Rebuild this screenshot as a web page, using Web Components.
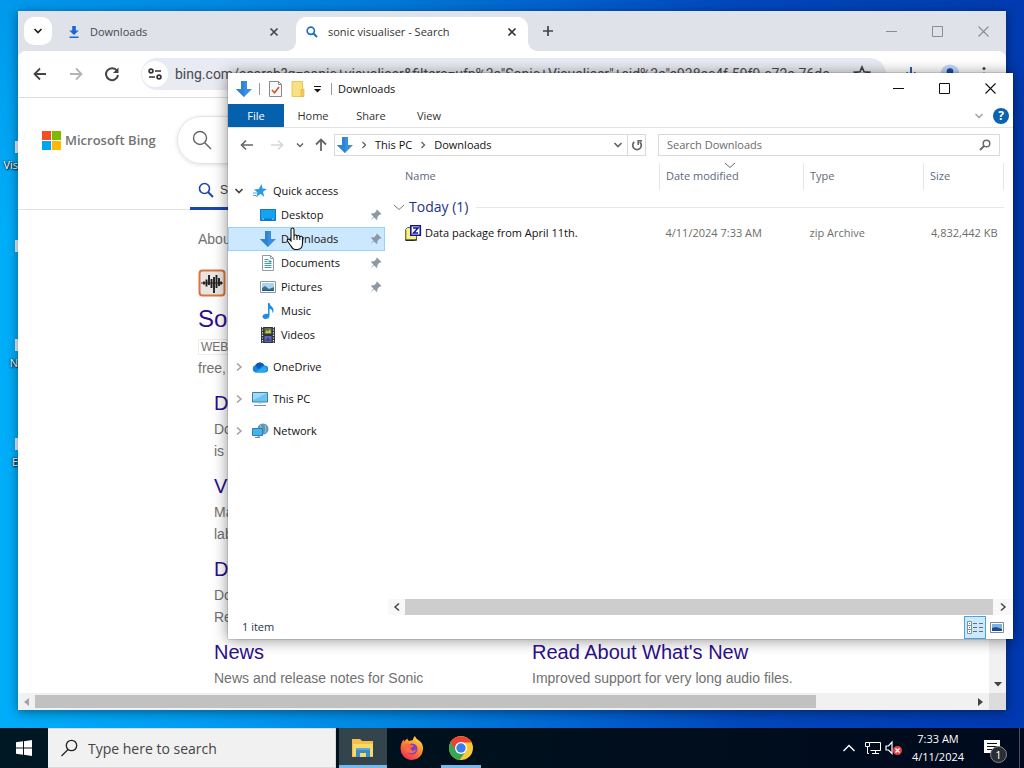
<!DOCTYPE html>
<html lang="en">
<head>
<meta charset="utf-8">
<title>Desktop</title>
<style>
  html, body { height: 100%; margin: 0; }
  body { overflow: hidden; font-family: "Open Sans", "Noto Sans", sans-serif; font-size: 11px; line-height: 16px; color: #111; }
</style>
</head>
<body>
<desk-top>
  <desk-icon label="Vis"></desk-icon>
  <desk-icon label=""></desk-icon>
  <desk-icon label="N"></desk-icon>
  <desk-icon label="E"></desk-icon>
  <browser-window slot="windows">
    <browser-tab slot="tabs" icon="save" title="Downloads"></browser-tab>
    <browser-tab slot="tabs" icon="bing" title="sonic visualiser - Search" active></browser-tab>
    <bing-page></bing-page>
  </browser-window>
  <file-explorer slot="windows"></file-explorer>
  <mouse-pointer slot="windows"></mouse-pointer>
  <task-bar slot="taskbar"></task-bar>
</desk-top>

<script>
// Icons: [width, height, markup]
const ICONS = {
  chevron: [10, 10, '<path d="M1.500 3l3.500 3.500L8.500 3" fill="none" stroke="currentColor" stroke-width="1.700"/>'],
  chevronThin: [12, 12, '<path d="M1 4l5 4.500L11 4" fill="none" stroke="currentColor" stroke-width="1"/>'],
  chevronRight: [10, 10, '<path d="M3 1.500L7 5 3 8.500" fill="none" stroke="currentColor" stroke-width="1.500"/>'],
  chevronLeft: [10, 10, '<path d="M7 1.500L3 5l4 3.500" fill="none" stroke="currentColor" stroke-width="1.500"/>'],
  chevronUp: [14, 14, '<path d="M1.500 10L7 4.500 12.500 10" fill="none" stroke="currentColor" stroke-width="1.400"/>'],
  back: [14, 14, '<path d="M13 7H2M7 1.500L1.500 7 7 12.500" fill="none" stroke="currentColor" stroke-width="1.800"/>'],
  forward: [14, 14, '<path d="M1 7h11M7 1.500L12.500 7 7 12.500" fill="none" stroke="currentColor" stroke-width="1.800"/>'],
  left: [14, 12, '<path d="M13 6H2M6 1.500L1.500 6 6 10.500" fill="none" stroke="currentColor" stroke-width="1.600"/>'],
  right: [14, 12, '<path d="M1 6h11M8 1.500L12.500 6 8 10.500" fill="none" stroke="currentColor" stroke-width="1.600"/>'],
  up: [12, 14, '<path d="M6 13V2M1 6.500l5-5 5 5" fill="none" stroke="currentColor" stroke-width="1.800"/>'],
  caret: [8, 8, '<path d="M1 2.500l3 3 3-3" fill="none" stroke="currentColor" stroke-width="1.500"/>'],
  crumb: [8, 8, '<path d="M2.500 1l3 3-3 3" fill="none" stroke="currentColor" stroke-width="1.400"/>'],
  reload: [16, 16, '<path d="M13 4.800A6 6 0 1 0 14 9" fill="none" stroke="currentColor" stroke-width="2"/><path d="M14.500 1.500v5.500H9z" fill="currentColor"/>'],
  refresh: [12, 13, '<path d="M3.300 3A4.300 4.300 0 1 0 8.700 3" fill="none" stroke="currentColor" stroke-width="1.700"/><path d="M11 1.700H7.200V6" fill="none" stroke="currentColor" stroke-width="1.600"/>'],
  tune: [14, 12, '<g fill="none" stroke="currentColor" stroke-width="1.700"><circle cx="3" cy="3" r="1.900"/><path d="M7 3h6M1 9h6"/><circle cx="11" cy="9" r="1.900"/></g>'],
  close: [10, 10, '<path d="M1.500 1.500l7 7M8.500 1.500l-7 7" stroke="currentColor" stroke-width="1.700"/>'],
  plus: [12, 12, '<path d="M6 1v10M1 6h10" stroke="currentColor" stroke-width="1.700"/>'],
  save: [12, 14, '<path d="M4.200 1h3.600v4.500h3L6 10 1.200 5.500h3zM1.500 11.500h9V13h-9z" fill="#1a66d6"/>'],
  download: [14, 16, '<path d="M7 1v10M2.500 6.500L7 11l4.500-4.500M1 11v3h12v-3" fill="none" stroke="#174ea6" stroke-width="1.800"/>'],
  bing: [12, 12, '<circle cx="4.800" cy="4.800" r="3.600" fill="none" stroke="#1b6ec2" stroke-width="1.700"/><path d="M7.500 7.500L11 11" stroke="#1b6ec2" stroke-width="1.900"/>'],
  lens: [20, 20, '<circle cx="8" cy="8" r="6.500" fill="none" stroke="currentColor" stroke-width="1.400"/><path d="M12.800 12.800L19 19" stroke="currentColor" stroke-width="1.500"/>'],
  lensBold: [16, 16, '<circle cx="6.500" cy="6.500" r="5" fill="none" stroke="currentColor" stroke-width="1.600"/><path d="M10 10l5 5" stroke="currentColor" stroke-width="2"/>'],
  lensLeft: [12, 12, '<circle cx="7.500" cy="4.500" r="3.300" fill="none" stroke="currentColor" stroke-width="1.500"/><path d="M5 7L1 11" stroke="currentColor" stroke-width="1.900"/>'],
  lensTask: [18, 18, '<circle cx="11.500" cy="6.500" r="5.200" fill="none" stroke="currentColor" stroke-width="1.300"/><path d="M8 10.500L1.500 17" stroke="currentColor" stroke-width="1.300"/>'],
  star: [18, 18, '<path d="M9 2l2.100 4.800 5.200.500-3.900 3.500 1.100 5.200L9 13.300 4.500 16l1.100-5.200-3.900-3.500 5.200-.500z" fill="none" stroke="#444" stroke-width="1.700"/>'],
  profile: [20, 20, '<circle cx="10" cy="10" r="9.500" fill="#c4d7f8"/><circle cx="10" cy="7.500" r="3.300" fill="#174ea6"/><path d="M4 16q6-6 12 0" fill="#174ea6"/>'],
  dots: [4, 16, '<g fill="#444"><circle cx="2" cy="2.500" r="1.500"/><circle cx="2" cy="8" r="1.500"/><circle cx="2" cy="13.500" r="1.500"/></g>'],
  winMin: [11, 11, '<path d="M0 5.500h11" stroke="currentColor"/>'],
  winMax: [11, 11, '<path d="M.5.500h10v10H.500z" fill="none" stroke="currentColor"/>'],
  winClose: [11, 11, '<path d="M.5.500l10 10M10.500.500l-10 10" stroke="currentColor" stroke-width="1.100"/>'],
  microsoft: [19, 19, '<path d="M0 0h9v9H0z" fill="#f25022"/><path d="M10 0h9v9h-9z" fill="#7fba00"/><path d="M0 10h9v9H0z" fill="#00a4ef"/><path d="M10 10h9v9h-9z" fill="#ffb900"/>'],
  sonic: [28, 28, '<rect x="1.500" y="1.500" width="25" height="25" rx="3" fill="#e9e5e2" stroke="#d9743c" stroke-width="2"/><path d="M3 14h22" stroke="#222"/><path d="M6 12.500v3M8.500 10.500v7M11 6v10M13.500 10v9M16 8v16M18.500 6v13M21 9v8M23 12.500v3" stroke="#222" stroke-width="1.900"/>'],
  arrowDown: [16, 18, '<path d="M5 1h6v8h5l-8 8-8-8h5z" fill="#3a8fdc"/><path d="M5 1h3v16L0 9h5z" fill="#2e83d2"/>'],
  check: [13, 16, '<path d="M.5.500h9l3 3v12H.500z" fill="#f8f8f8" stroke="#8a8a8a"/><path d="M9.500.500v3h3" fill="none" stroke="#8a8a8a"/><path d="M3 9l2.500 2.800L10 6" fill="none" stroke="#d4562e" stroke-width="1.600"/>'],
  folderPlain: [14, 16, '<path d="M1 .500h10.500v15H1z" fill="#fbe083" stroke="#e3bd4b" stroke-width=".8"/><path d="M10 8.500l3-.5v7.500H10z" fill="#f0cb60" stroke="#d9b040" stroke-width=".6"/>'],
  quickCaret: [8, 8, '<path d="M0 1.500h7" stroke="#111"/><path d="M0 4h7L3.500 7.500z" fill="#111"/>'],
  help: [16, 16, '<circle cx="8" cy="8" r="8" fill="#0a63b0"/>'],
  quick: [14, 14, '<path d="M8.500 0l1 4.600 4.500.400-4 2.800L11.300 13 7.500 9.800 3 13.500l1.500-5L1 5.600l4.800-.600z" fill="#2a9ae6"/><path d="M0 9h4M0 11.500h3" stroke="#49a8ea"/>'],
  desktop: [16, 14, '<path d="M.5 1.500h15v11H.500z" fill="#15a2ef" stroke="#0f78c4"/><path d="M1 10.500h14v1.500H1z" fill="#0b7bd0"/><path d="M2 11h2M12 11h2" stroke="#d8f0ff" stroke-width=".7"/>'],
  document: [12, 16, '<path d="M.5.500h8l3 3v12H.500z" fill="#fff" stroke="#8c9aa5"/><path d="M8.500.500v3h3" fill="none" stroke="#8c9aa5"/><path d="M2.500 4.500h4M2.500 6.500h3M2.500 8.500h7M2.500 10.500h7M2.500 12.500h7" stroke="#4197b8"/><path d="M6.500 5.500h3v2h-3z" fill="#44a06f"/>'],
  picture: [16, 12, '<path d="M.5.500h15v11H.500z" fill="#fff" stroke="#8a98a5"/><path d="M2 2h12v8H2z" fill="#a9d4ef"/><path d="M2 7l3-2 4 3 5-2v4H2z" fill="#39718f"/><path d="M2 9h12v1H2z" fill="#2a5378"/>'],
  music: [12, 16, '<path d="M6 0h1.500c.5 3 4 3.800 4 7.200 0 1.300-.4 2-1.200 3 .6-3-1-4-2.800-4.400v7C7.500 15 5.500 16 3.500 16 1.500 16 .500 15 .500 13.500 .500 11.500 3.500 10.500 6 11z" fill="#1d8fe0"/>'],
  video: [14, 16, '<path d="M0 0h14v16H0z" fill="#30323a"/><path d="M1.500 0v16M12.500 0v16" stroke="#e5e5e5" stroke-width="1.200" stroke-dasharray="1.200 1.400"/><path d="M3.500 1h7v6h-7z" fill="#67713c"/><path d="M3.500 9h7v6h-7z" fill="#6564b8"/><path d="M4 6l2-3 1 2 2-3 1 4z" fill="#cbc75b"/><path d="M4 14l3-4 3 4z" fill="#37478b"/>'],
  cloud: [16, 12, '<path d="M4 11.500a3.800 3.800 0 0 1-.5-7.400A5 5 0 0 1 12.500 4.500 3.500 3.500 0 0 1 13 11.500z" fill="#1484dc"/><path d="M3.500 4.100A5 5 0 0 1 12 3.800L6 8z" fill="#0a59b5"/><path d="M3 11.500L12.500 5a3.500 3.500 0 0 1 .5 6.500z" fill="#2ba7ef"/>'],
  pc: [16, 16, '<path d="M.5 1.500h15v9.500H.500z" fill="#6bc4f1" stroke="#3c7fa8"/><path d="M1 2h14L1 9z" fill="#9adcf9"/><path d="M6 11h4v1.500H6z" fill="#a9bdc8"/><path d="M2 14.500h12" stroke="#7292a4"/>'],
  network: [17, 16, '<circle cx="11" cy="6" r="5.500" fill="#5f97b5"/><path d="M8 2q3 3 0 7M13 2q2 4 0 8" fill="none" stroke="#a9d2e4" stroke-width=".8"/><path d="M.5 5.500h10v7H.500z" fill="#45b2ec" stroke="#2a7fb5"/><path d="M5 13h2v1.500H3h5" fill="none" stroke="#6c8fa5"/>'],
  pin: [12, 12, '<path d="M7 .500L11.500 5l-1 .8-1-.2L7.500 8 7.300 10.200 6.500 11 4 8.300.500 11.500 3.500 7.600 1 5l.8-.8L4 4.300 6.400 2.300 6.200 1.300z" fill="#8c99a5"/>'],
  zip: [17, 16, '<path d="M.5 4.500l2-2h4v3h5v9l-2 1H.500z" fill="#f4f08c" stroke="#555"/><path d="M1 5v9.500" stroke="#a4a000"/><path d="M1 15h11" stroke="#000"/><path d="M5.800.800h9.500v9.500H5.800z" fill="#fff" stroke="#1212a0" stroke-width="1.600"/><path d="M8 3h5L8.500 8H13" fill="none" stroke="#1212a0" stroke-width="1.500"/>'],
  details: [18, 13, '<path d="M1.500.500h4v12h-4zM1.500 4.500h4M1.500 8.500h4" fill="#fff" stroke="#7895a8"/><path d="M3 2.500h1M3 6.500h1M3 10.500h1" stroke="#c23b3b"/><path d="M7 2.500h4M7 6.500h4M7 10.500h4M13 2.500h4M13 6.500h4M13 10.500h4" stroke="#5c7180"/>'],
  thumbs: [14, 11, '<path d="M.5.500h13v10H.500z" fill="#fff" stroke="#7d8b99"/><path d="M2 2h10v7H2z" fill="#78b4e8"/><path d="M2 6l4-1 6 2v2H2z" fill="#234a84"/>'],
  triLeft: [5, 8, '<path d="M5 0v8L0 4z" fill="#a3a3a3"/>'],
  triRight: [5, 8, '<path d="M0 0v8l5-4z" fill="#444"/>'],
  triDown: [8, 5, '<path d="M0 0h8L4 4.500z" fill="#444"/>'],
  start: [16, 16, '<path d="M0 2.300L7 1.300V7.600H0zM8 1.200L16 0v7.600H8zM0 8.500h7v6.300L0 13.800zM8 8.500h8V16l-8-1.200z" fill="#fff"/>'],
  explorer: [22, 18, '<path d="M0 0h8l2 2h11v16H0z" fill="#f3c04a"/><path d="M1 5h20v12H1z" fill="#fbd968"/><path d="M4 9h14v9h-4v-4H8v4H4z" fill="#3b8ec5"/><path d="M4 9h14v2H4z" fill="#5ba9d8"/><path d="M8 14h6v4H8z" fill="#fbd968"/>'],
  firefox: [24, 24, '<defs><linearGradient id="f" x1=".8" y1="0" x2=".2" y2="1"><stop offset="0" stop-color="#ffe14d"/><stop offset=".45" stop-color="#ff8a2a"/><stop offset="1" stop-color="#f0255f"/></linearGradient></defs><path d="M13 4c0-2 1-3 2-4 .5 2 2 3 4 4.500 2.500 1.500 4.500 5 4 9A11.300 11.300 0 0 1 12 24 11.300 11.300 0 0 1 .600 12C.600 8.500 2 5.500 3.500 3.500c.2 1 .5 1.500 1 2C5.500 3.500 6.500 3 7.500 2.500c0 1 .5 2 1.500 2.500z" fill="url(#f)"/><circle cx="12" cy="13" r="5.500" fill="#7a3fd0"/><path d="M4 9c2-2 5-2 7 0l3 .500c-1 2-3 1.500-3.500 3 .5 2.500 4 3 6 .500C16 18 8 19 6 14z" fill="#ff6a3a"/>'],
  chrome: [24, 24, '<circle cx="12" cy="12" r="12" fill="#fcc934"/><path d="M12 12L1.600 6A12 12 0 0 0 10.500 23.900L17 15z" fill="#34a853"/><path d="M1.600 6a12 12 0 0 1 20.800 0.500H12L7 15z" fill="#ea4335"/><circle cx="12" cy="12" r="6" fill="#fff"/><circle cx="12" cy="12" r="4.700" fill="#3b7ded"/>'],
  ethernet: [17, 14, '<path d="M5.500 1.500h11v8H6.500M3.500 6v6.500M8 12.500h7M11.500 10v2.500" fill="none" stroke="#fff"/><path d="M1.500 1.500h4v4h-4zM3.500 12.500H5" fill="none" stroke="#fff"/>'],
  volume: [18, 16, '<path d="M1 6h2.500L7 2v11.500L3.500 10H1z" fill="none" stroke="#fff" stroke-width="1.200"/><circle cx="12.500" cy="10.500" r="4.500" fill="#e04545"/><path d="M10.500 8.500l4 4M14.500 8.500l-4 4" stroke="#fff" stroke-width="1.200"/>'],
  note: [16, 17, '<path d="M0 0h16v13h-6l-3 3.500V13H0z" fill="#fff"/><path d="M3 3.500h10M3 6.500h10M3 9.500h7" stroke="#061020"/>'],
  hand: [18, 24, '<path d="M5 14V2.500a1.500 1.500 0 0 1 3 0V9c.5-1.500 2.800-1.200 3 .3.500-1.200 2.600-1 2.800.5.700-1 2.700-.7 2.700 1V16c0 4-2 6.500-5 6.500H9c-2 0-3-1.500-4-3.500L1.500 14c-.7-1.500.7-2.500 2-1.500z" fill="#fff" stroke="#111" stroke-width="1.100"/><path d="M8 9v4M11 9.500V13M13.800 10v3" stroke="#111"/>']
};

const icon = (name, attrs = '') => `<ui-icon name="${name}" ${attrs}></ui-icon>`;

// Rules shared by every component
const RESET = `
  * { box-sizing: border-box; }
  :host { box-sizing: border-box; }
  :host([hidden]) { display: none; }
  button, input { font: inherit; color: inherit; border: 0; padding: 0; margin: 0; background: none; outline: 0; }
  button { display: flex; align-items: center; justify-content: center; }
  input { min-width: 0; }
  a { text-decoration: none; }
`;

class BaseElement extends HTMLElement {
  connectedCallback() {
    if (this.shadowRoot) return;
    this.attachShadow({ mode: 'open' });
    this.shadowRoot.innerHTML = `<style>${RESET}${this.styles()}</style>${this.markup()}`;
  }
  attr(name) {
    return this.getAttribute(name) || '';
  }
  styles() { return ''; }
  markup() { return '<slot></slot>'; }
}

class UiIcon extends BaseElement {
  styles() {
    return ':host { display: inline-flex; flex: none; } svg { display: block; }';
  }
  markup() {
    const [w, h, body] = ICONS[this.attr('name')];
    return `<svg width="${w}" height="${h}" viewBox="0 0 ${w} ${h}" aria-hidden="true">${body}</svg>`;
  }
}

class DeskTop extends BaseElement {
  styles() {
    return `
      :host { display: flex; flex-direction: column; height: 100%;
        background: linear-gradient(180deg, rgba(0, 70, 180, .2), transparent 30%),
          linear-gradient(90deg, #00adf9 0%, #009cf0 20%, #0086e2 38%, #0066d2 55%, #0048bd 72%, #0038b0 100%); }
      .area { position: relative; flex: 1; min-height: 0; overflow: hidden; }
      .icons { display: flex; flex-direction: column; padding-top: 141px; width: 18px; }
    `;
  }
  markup() {
    return `
      <div class="area">
        <div class="icons"><slot></slot></div>
        <slot name="windows"></slot>
      </div>
      <slot name="taskbar"></slot>
    `;
  }
}

class DeskIcon extends BaseElement {
  styles() {
    return `
      :host { display: flex; flex-direction: column; align-items: flex-end; height: 99px; color: #fff; text-shadow: 1px 1px 2px #000, 0 0 2px #000; }
      i { width: 3px; height: 12px; margin-bottom: 4px; background: #e8f1f8; }
    `;
  }
  markup() {
    return `<i></i><span>${this.attr('label')}</span>`;
  }
}

class WindowControls extends BaseElement {
  styles() {
    return `
      :host { display: flex; align-self: stretch; }
      button { width: 46px; }
    `;
  }
  markup() {
    return `
      <button aria-label="Minimize">${icon('winMin')}</button>
      <button aria-label="Maximize">${icon('winMax')}</button>
      <button aria-label="Close">${icon('winClose')}</button>
    `;
  }
}

class BrowserTab extends BaseElement {
  styles() {
    return `
      :host { display: flex; align-items: center; width: 238px; height: 34px; padding: 0 16px 4px 10px; gap: 10px; color: #45484d; }
      :host([active]) { width: 232px; padding-right: 10px; background: #fff; border-radius: 10px 10px 0 0; color: #333; position: relative; }
      .title { flex: 1; justify-content: flex-start; white-space: nowrap; }
      .x { width: 12px; height: 16px; }
      :host([active])::before, :host([active])::after { content: ""; position: absolute; bottom: 0; width: 10px; height: 10px; }
      :host([active])::before { left: -10px; background: radial-gradient(circle at 0 0, transparent 10px, #fff 10px); }
      :host([active])::after { right: -10px; background: radial-gradient(circle at 100% 0, transparent 10px, #fff 10px); }
    `;
  }
  markup() {
    return `
      ${icon(this.attr('icon'))}
      <button class="title">${this.attr('title')}</button>
      <button class="x" aria-label="Close tab">${icon('close')}</button>
    `;
  }
}

class ScrollBar extends BaseElement {
  styles() {
    return `
      :host { display: flex; align-items: stretch; height: 17px; background: #f1f1f1; color: #444; }
      .arrow { width: 17px; flex: none; }
      .thumb { flex: 5; margin: 2px 0; background: #c1c1c1; }
      .rest { flex: 1; }
      :host([vertical]) { flex-direction: column; justify-content: flex-end; width: 17px; height: auto; }
      :host([vertical]) .arrow { width: 17px; height: 18px; }
      :host([full]) { height: 16px; background: #f8f8f8; }
      :host([full]) .thumb { margin: 0; background: #cdcdcd; }
      :host([full]) .right { width: 20px; }
    `;
  }
  markup() {
    if (this.hasAttribute('vertical')) return `<button class="arrow" aria-label="Scroll down">${icon('triDown')}</button>`;
    const full = this.hasAttribute('full');
    return `
      <button class="arrow" aria-label="Scroll left">${icon(full ? 'chevronLeft' : 'triLeft')}</button>
      <div class="thumb"></div>
      ${full ? '' : '<div class="rest"></div>'}
      <button class="arrow right" aria-label="Scroll right">${icon(full ? 'chevronRight' : 'triRight')}</button>
    `;
  }
}

class BrowserWindow extends BaseElement {
  styles() {
    return `
      :host { position: absolute; inset: 11px 18px 18px 18px; display: flex; flex-direction: column; background: #dfe2e8; box-shadow: 0 2px 10px rgba(0, 0, 0, .45); }
      .strip { display: flex; align-items: flex-end; height: 40px; flex: none; }
      .list { align-self: center; width: 28px; height: 28px; margin: 0 6px; border-radius: 10px; background: #fff; color: #222; }
      .tabs { display: flex; }
      .new { align-self: center; width: 20px; height: 20px; margin-left: 10px; color: #444; }
      window-controls { margin-left: auto; color: #8b8d92; }
      .toolbar { display: flex; align-items: center; height: 47px; flex: none; padding: 0 20px 0 4px; background: #fff; border-radius: 8px 8px 0 0; border-bottom: 1px solid #dcdde0; color: #444; }
      .nav { width: 36px; height: 28px; }
      .off { color: #b4b4b4; }
      .omnibox { display: flex; align-items: center; flex: 1; height: 32px; margin: 0 18px 0 11px; padding: 0 15px 0 1px; border-radius: 16px; background: #e9ebf2; }
      .info { width: 26px; height: 26px; border-radius: 50%; background: #fff; color: #333; margin-right: 7px; }
      .omnibox input { flex: 1; font: 14px/20px Roboto, "Noto Sans", sans-serif; height: 20px; color: #474a50; }
      .tools { display: flex; align-items: center; gap: 22px; }
      ::slotted(bing-page) { flex: 1; min-height: 0; }
      .row { display: flex; flex: 1; min-height: 0; }
      .bottom { display: flex; background: #dcdcdc; }
      .bottom scroll-bar { flex: 1; }
      .corner { width: 17px; }
    `;
  }
  markup() {
    return `
      <div class="strip">
        <button class="list" aria-label="Search tabs">${icon('chevron')}</button>
        <div class="tabs"><slot name="tabs"></slot></div>
        <button class="new" aria-label="New tab">${icon('plus')}</button>
        <window-controls></window-controls>
      </div>
      <div class="toolbar">
        <button class="nav" aria-label="Back">${icon('back')}</button>
        <button class="nav off" aria-label="Forward">${icon('forward')}</button>
        <button class="nav" aria-label="Reload">${icon('reload')}</button>
        <div class="omnibox">
          <button class="info" aria-label="Site information">${icon('tune')}</button>
          <input aria-label="Address" value="bing.com/search?q=sonic+visualiser&amp;filters=ufn%3a&quot;Sonic+Visualiser&quot;+sid%3a&quot;e938ec4f-59f9-c72e-76de">
          ${icon('star')}
        </div>
        <div class="tools">${icon('download')}${icon('profile')}${icon('dots')}</div>
      </div>
      <div class="row"><slot></slot><scroll-bar vertical></scroll-bar></div>
      <div class="bottom"><scroll-bar></scroll-bar><div class="corner"></div></div>
    `;
  }
}

class SiteLink extends BaseElement {
  styles() {
    return `
      :host { display: block; height: 83px; overflow: hidden; }
      a { display: block; font-size: 20px; line-height: 26px; color: #2c0f8c; margin-bottom: 2px; white-space: nowrap; }
      p { margin: 0; font-size: 14px; line-height: 22px; white-space: pre-line; }
    `;
  }
  markup() {
    return `<a href="#">${this.attr('title')}</a><p><slot></slot></p>`;
  }
}

class BingPage extends BaseElement {
  styles() {
    return `
      :host { display: block; background: #fff; overflow: hidden; font-family: "Liberation Sans", Arial, sans-serif; font-size: 14px; color: #717171; }
      header { display: flex; align-items: center; gap: 4px; height: 48px; margin: 18px 0 0 24px; }
      .brand { width: 108px; font: 600 13px/20px "Open Sans", sans-serif; color: #737373; white-space: nowrap; }
      .search { flex: 1; height: 48px; border: 1px solid #e3e3e3; border-radius: 24px; margin-right: 20px; padding: 0 14px; display: flex; align-items: center; box-shadow: 0 1px 4px rgba(0, 0, 0, .12); color: #666; }
      nav { display: flex; margin-top: 8px; padding-left: 172px; height: 38px; border-bottom: 1px solid #e2e2e2; }
      nav a { display: flex; align-items: center; gap: 6px; padding: 0 8px; height: 38px; border-bottom: 3px solid #1b46ad; color: #444; font-size: 12px; }
      nav ui-icon { color: #1b46ad; }
      main { padding: 19px 0 0 180px; }
      .count { line-height: 20px; margin-bottom: 20px; }
      .main { display: block; font-size: 24px; line-height: 32px; color: #2c0f8c; margin: 6px 0 3px; }
      .main, .sub { white-space: nowrap; }
      .web { display: inline-block; border: 1px solid #ececec; padding: 0 2px; font-size: 12px; line-height: 14px; }
      .sub { line-height: 22px; margin-top: 2px; height: 33px; }
      .links { display: grid; grid-template-columns: 294px 294px; column-gap: 24px; padding-left: 16px; }
      .pic { display: flex; }
    `;
  }
  markup() {
    return `
      <header>
        ${icon('microsoft')}
        <span class="brand">Microsoft Bing</span>
        <div class="search">${icon('lens')}</div>
      </header>
      <nav><a href="#">${icon('lensBold')}S</a></nav>
      <main>
        <div class="count">About</div>
        <div class="pic">${icon('sonic')}</div>
        <a class="main" href="#">Sonic</a>
        <span class="web">WEB</span>
        <div class="sub">free,</div>
        <div class="links">
          <site-link title="D">Do\nis</site-link><span></span>
          <site-link title="V">Ma\nlab</site-link><span></span>
          <site-link title="D">Do\nRe</site-link><span></span>
          <site-link title="News">News and release notes for Sonic</site-link>
          <site-link title="Read About What's New">Improved support for very long audio files.</site-link>
        </div>
      </main>
    `;
  }
}

class NavItem extends BaseElement {
  styles() {
    return `
      :host { display: flex; align-items: center; height: 24px; padding: 0 2px 0 5px; border: 1px solid transparent; color: #111; white-space: nowrap; }
      :host([selected]) { background: #cce8ff; border-color: #99d1ff; }
      :host([child]) { padding-left: 13px; }
      :host([top]) { margin-top: 8px; }
      .arrow { width: 10px; height: 10px; display: flex; color: #a0a0a0; }
      :host([open]) .arrow { color: #444; }
      .pic { width: 16px; margin: 0 5px 0 8px; display: flex; justify-content: center; }
      a { color: inherit; flex: 1; }
    `;
  }
  markup() {
    let arrow = '';
    if (this.hasAttribute('open')) arrow = icon('chevron');
    else if (!this.hasAttribute('child')) arrow = icon('chevronRight');
    return `
      <span class="arrow">${arrow}</span>
      <span class="pic">${icon(this.attr('icon'))}</span>
      <a href="#">${this.attr('label')}</a>
      ${this.hasAttribute('pinned') ? icon('pin') : ''}
    `;
  }
}

class FileList extends BaseElement {
  styles() {
    return `
      :host { display: block; flex: 1; padding: 4px 9px 0 5px; }
      table { width: 100%; table-layout: fixed; border-collapse: collapse; color: #6d6d6d; }
      th { font-weight: normal; text-align: left; padding: 0; }
      thead th { height: 27px; padding: 0 6px 2px; color: #5c6a7c; border-right: 1px solid #e5e5e5; position: relative; }
      thead th:first-child, .name { padding-left: 12px; }
      thead ui-icon { position: absolute; top: -4px; left: 45%; }
      .date { width: 144px; }
      .type { width: 120px; }
      .size { width: 80px; }
      .group { display: flex; align-items: center; gap: 4px; height: 34px; color: #1e3287; font-size: 14px; }
      .group ui-icon { color: #777; }
      .group hr { flex: 1; margin: 0 0 0 4px; border: 0; border-top: 1px solid #e8e8e8; }
      td { height: 18px; padding: 0 6px; white-space: nowrap; }
      .name div { display: flex; align-items: center; gap: 3px; color: #111; }
      td.size { text-align: right; }
    `;
  }
  markup() {
    return `
      <table>
        <thead><tr>
          <th>Name</th>
          <th class="date">Date modified${icon('chevronThin')}</th>
          <th class="type">Type</th>
          <th class="size">Size</th>
        </tr></thead>
        <tbody>
          <tr><th colspan="4"><div class="group">${icon('chevronThin')}Today (1)<hr></div></th></tr>
          <tr>
            <td class="name"><div>${icon('zip')}Data package from April 11th.</div></td>
            <td>4/11/2024 7:33 AM</td>
            <td>zip Archive</td>
            <td class="size">4,832,442 KB</td>
          </tr>
        </tbody>
      </table>
    `;
  }
}

class FileExplorer extends BaseElement {
  styles() {
    return `
      :host { position: absolute; inset: 73px 11px 89px 228px; display: flex; flex-direction: column; background: #fff; box-shadow: 0 1px 14px rgba(0, 0, 0, .45), 0 0 1px rgba(0, 0, 0, .6); }
      .title { display: flex; align-items: center; height: 31px; padding-left: 8px; flex: none; }
      .sep { width: 1px; height: 12px; background: #999; }
      .quick { display: flex; align-items: center; gap: 9px; margin: 0 6px 0 7px; }
      window-controls { margin-left: auto; color: #111; }
      .ribbon { display: flex; align-items: stretch; height: 24px; flex: none; border-bottom: 1px solid #e2e2e2; color: #333; }
      .ribbon button { width: 58px; }
      .ribbon .file { width: 56px; background: #0560ad; color: #fff; }
      .ribbon .more { width: 24px; margin-left: auto; color: #aaa; }
      .ribbon .help { position: relative; width: 20px; margin-right: 2px; }
      .help b { position: absolute; inset: 0; line-height: 23px; font-size: 12px; color: #fff; }
      .bar { display: flex; align-items: center; height: 31px; padding: 3px 13px 0 11px; flex: none; color: #666; }
      .bar > button { width: 16px; height: 22px; margin-right: 14px; }
      .bar > .off { color: #d6d6d6; margin-right: 10px; }
      .bar > .recent { width: 10px; margin-right: 9px; }
      .bar > .up { width: 14px; margin-right: 6px; }
      .box { display: flex; align-items: center; height: 22px; border: 1px solid #d9d9d9; }
      .path { flex: 308; padding-left: 2px; gap: 6px; }
      .path ui-icon[name=crumb] { margin: 0 1px; }
      .path a { color: #111; }
      .path .recent { margin-left: auto; margin-right: -2px; }
      .path .reload { width: 18px; height: 20px; border-left: 1px solid #d9d9d9; }
      .find { flex: 324; margin-left: 12px; padding: 0 8px; color: #6b6b6b; }
      .find input { flex: 1; height: 16px; }
      .find input::placeholder { color: #6b6b6b; opacity: 1; }
      .body { display: flex; flex: 1; min-height: 0; }
      nav { width: 157px; padding-top: 20px; flex: none; }
      .files { display: flex; flex-direction: column; flex: 1; min-width: 0; margin-left: 3px; }
      footer { display: flex; align-items: center; height: 24px; padding: 0 5px 0 14px; flex: none; color: #26344d; }
      footer button { width: 22px; height: 23px; }
      footer .on { margin-left: auto; border: 1px solid #4aa3dc; background: #cde8f8; }
    `;
  }
  markup() {
    return `
      <div class="title">
        ${icon('arrowDown')}
        <div class="quick"><i class="sep"></i>${icon('check')}${icon('folderPlain')}${icon('quickCaret')}<i class="sep"></i></div>
        Downloads
        <window-controls></window-controls>
      </div>
      <div class="ribbon">
        <button class="file">File</button>
        <button>Home</button>
        <button>Share</button>
        <button>View</button>
        <button class="more" aria-label="Expand the ribbon">${icon('chevron')}</button>
        <button class="help" aria-label="Help">${icon('help')}<b>?</b></button>
      </div>
      <div class="bar">
        <button aria-label="Back">${icon('left')}</button>
        <button class="off" aria-label="Forward">${icon('right')}</button>
        <button class="recent" aria-label="Recent locations">${icon('caret')}</button>
        <button class="up" aria-label="Up">${icon('up')}</button>
        <div class="box path">
          ${icon('arrowDown')}
          ${icon('crumb')}<a href="#">This PC</a>
          ${icon('crumb')}<a href="#">Downloads</a>
          <button class="recent" aria-label="Previous locations">${icon('chevron')}</button>
          <button class="reload" aria-label="Refresh">${icon('refresh')}</button>
        </div>
        <div class="box find"><input aria-label="Search Downloads" placeholder="Search Downloads">${icon('lensLeft')}</div>
      </div>
      <div class="body">
        <nav>
          <nav-item icon="quick" label="Quick access" open></nav-item>
          <nav-item icon="desktop" label="Desktop" child pinned></nav-item>
          <nav-item icon="arrowDown" label="Downloads" child pinned selected></nav-item>
          <nav-item icon="document" label="Documents" child pinned></nav-item>
          <nav-item icon="picture" label="Pictures" child pinned></nav-item>
          <nav-item icon="music" label="Music" child></nav-item>
          <nav-item icon="video" label="Videos" child></nav-item>
          <nav-item icon="cloud" label="OneDrive" top></nav-item>
          <nav-item icon="pc" label="This PC" top></nav-item>
          <nav-item icon="network" label="Network" top></nav-item>
        </nav>
        <div class="files">
          <file-list></file-list>
          <scroll-bar full></scroll-bar>
        </div>
      </div>
      <footer>
        1 item
        <button class="on" aria-label="Details view">${icon('details')}</button>
        <button aria-label="Thumbnail view">${icon('thumbs')}</button>
      </footer>
    `;
  }
}

class MousePointer extends BaseElement {
  styles() {
    return ':host { position: absolute; left: 286px; top: 227px; }';
  }
  markup() {
    return icon('hand');
  }
}

class TaskBar extends BaseElement {
  styles() {
    return `
      :host { display: flex; height: 40px; flex: none; background: linear-gradient(90deg, #001824, #00101c 45%, #000a1e); color: #fff; }
      .start { width: 48px; }
      .search { display: flex; align-items: center; gap: 10px; width: 288px; padding: 0 12px; background: #f1f1f1; color: #222; border: 1px solid #dadada; border-left: 0; }
      .search input { flex: 1; font-size: 14px; height: 22px; }
      .search input::placeholder { color: #444; opacity: 1; }
      .apps { display: flex; margin-left: 3px; }
      .apps button { width: 48px; border-bottom: 3px solid transparent; padding-top: 3px; margin-right: 1px; }
      .apps .active { background: #33444c; border-color: #76b9ed; }
      .apps .running { width: 40px; margin-left: 4px; border-color: #76b9ed; }
      .tray { display: flex; align-items: center; margin-left: auto; gap: 4px; }
      .tray ui-icon[name=chevronUp] { margin-right: 4px; }
      .clock { width: 54px; margin-left: 4px; text-align: center; line-height: 18px; white-space: nowrap; }
      .notes { position: relative; width: 46px; height: 40px; }
      .badge { position: absolute; right: 8px; bottom: 5px; width: 17px; height: 17px; border: 1px solid #888; border-radius: 50%; background: #2a2d33; line-height: 15px; }
      .peek { align-self: stretch; width: 5px; border-left: 1px solid #4a5060; }
    `;
  }
  markup() {
    return `
      <button class="start" aria-label="Start">${icon('start')}</button>
      <label class="search">${icon('lensTask')}<input aria-label="Search" placeholder="Type here to search"></label>
      <div class="apps">
        <button class="active" aria-label="File Explorer">${icon('explorer')}</button>
        <button aria-label="Firefox">${icon('firefox')}</button>
        <button class="running" aria-label="Chrome">${icon('chrome')}</button>
      </div>
      <div class="tray">
        ${icon('chevronUp')}${icon('ethernet')}${icon('volume')}
        <div class="clock">7:33 AM<br>4/11/2024</div>
        <button class="notes" aria-label="Notifications">${icon('note')}<span class="badge">1</span></button>
        <span class="peek"></span>
      </div>
    `;
  }
}

customElements.define('ui-icon', UiIcon);
customElements.define('desk-top', DeskTop);
customElements.define('desk-icon', DeskIcon);
customElements.define('window-controls', WindowControls);
customElements.define('browser-tab', BrowserTab);
customElements.define('scroll-bar', ScrollBar);
customElements.define('browser-window', BrowserWindow);
customElements.define('site-link', SiteLink);
customElements.define('bing-page', BingPage);
customElements.define('nav-item', NavItem);
customElements.define('file-list', FileList);
customElements.define('file-explorer', FileExplorer);
customElements.define('mouse-pointer', MousePointer);
customElements.define('task-bar', TaskBar);
</script>
</body>
</html>
